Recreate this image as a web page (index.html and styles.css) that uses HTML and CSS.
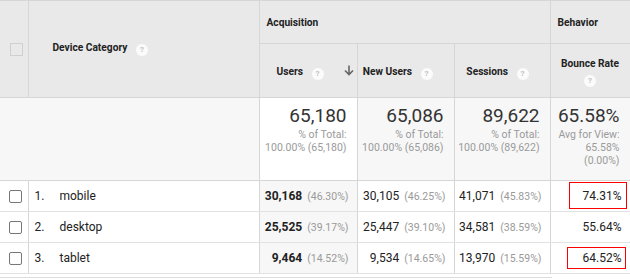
FILE: index.html
```html
<!DOCTYPE html>
<html>
<head>
<meta charset="utf-8">
<link rel="stylesheet" href="styles.css">
</head>
<body>
<div class="wrap">
<table class="report">
  <colgroup>
    <col class="c-cb"><col class="c-dim"><col class="c-users"><col class="c-new"><col class="c-sess"><col class="c-bounce">
  </colgroup>
  <thead>
    <tr class="h1">
      <th class="cb" rowspan="2"><span class="box hbox"></span></th>
      <th class="dim" rowspan="2">Device Category <span class="help">?</span></th>
      <th class="group" colspan="3">Acquisition</th>
      <th class="group">Behavior</th>
    </tr>
    <tr class="h2">
      <th class="metric">Users <span class="help">?</span><svg class="sort" width="10" height="11" viewBox="0 0 10 11"><path d="M5 0.5v8.5M1 5.5l4 4 4-4" fill="none" stroke="#666" stroke-width="1.6"/></svg></th>
      <th class="metric">New Users <span class="help">?</span></th>
      <th class="metric">Sessions <span class="help">?</span></th>
      <th class="metric bounce">Bounce Rate<br><span class="help">?</span></th>
    </tr>
  </thead>
  <tbody>
    <tr class="sum">
      <td></td>
      <td></td>
      <td class="sorted"><div class="big">65,180</div><div class="sub">% of Total:<br>100.00% (65,180)</div></td>
      <td><div class="big">65,086</div><div class="sub">% of Total:<br>100.00% (65,086)</div></td>
      <td><div class="big">89,622</div><div class="sub">% of Total:<br>100.00% (89,622)</div></td>
      <td><div class="big">65.58%</div><div class="sub">Avg for View:<br>65.58%<br>(0.00%)</div></td>
    </tr>
    <tr class="row">
      <td class="cb"><span class="box"></span></td>
      <td class="dim"><span class="idx">1.</span>mobile</td>
      <td class="num sorted"><b>30,168</b><span class="pct">(46.30%)</span></td>
      <td class="num">30,105<span class="pct">(46.25%)</span></td>
      <td class="num">41,071<span class="pct">(45.83%)</span></td>
      <td class="num rate">74.31%<span class="mark m1"></span></td>
    </tr>
    <tr class="row">
      <td class="cb"><span class="box"></span></td>
      <td class="dim"><span class="idx">2.</span>desktop</td>
      <td class="num sorted"><b>25,525</b><span class="pct">(39.17%)</span></td>
      <td class="num">25,447<span class="pct">(39.10%)</span></td>
      <td class="num">34,581<span class="pct">(38.59%)</span></td>
      <td class="num rate">55.64%</td>
    </tr>
    <tr class="row">
      <td class="cb"><span class="box"></span></td>
      <td class="dim"><span class="idx">3.</span>tablet</td>
      <td class="num sorted"><b>9,464</b><span class="pct">(14.52%)</span></td>
      <td class="num">9,534<span class="pct">(14.65%)</span></td>
      <td class="num">13,970<span class="pct">(15.59%)</span></td>
      <td class="num rate">64.52%<span class="mark m3"></span></td>
    </tr>
  </tbody>
</table>
<div class="foot"></div>
</div>
</body>
</html>
```
FILE: styles.css
```css
html, body { margin: 0; padding: 0; background: #fff; }
body { font-family: Roboto, "Liberation Sans", Arial, sans-serif; color: #333; }
.wrap { width: 630px; }
.report { border-collapse: collapse; table-layout: fixed; width: 630px; }
.c-cb { width: 28px; }
.c-dim { width: 231px; }
.c-users { width: 98px; }
.c-new { width: 97px; }
.c-sess { width: 96px; }
.c-bounce { width: 80px; }
th, td { padding: 0; border: 1px solid #d6d6d6; }
thead th { background: #e9e9e9; font-size: 10.2px; font-weight: 700; color: #222; text-align: left; }
.report tr > :first-child { border-left: 0; }
.h1 { height: 43px; }
.h2 { height: 54px; }
th.cb { text-align: left; vertical-align: middle; padding-left: 10px; }
th.dim { padding-left: 24px; vertical-align: middle; }
th.group { padding-left: 7px; vertical-align: middle; }
th.metric { text-align: right; padding-right: 21px; padding-top: 4px; vertical-align: middle; white-space: nowrap; }
th.metric:first-child { padding-right: 3px; }
th.bounce { text-align: center; padding: 2px 0 0 0; line-height: 15px; }
.sort { margin-left: 20px; vertical-align: -1px; }
.help { display: inline-block; width: 12px; height: 12px; border-radius: 50%; background: #fbfbfb; color: #c4c4c4; font-size: 8px; line-height: 12px; text-align: center; font-weight: 700; margin-left: 6px; vertical-align: -1px; }
th.bounce .help { margin-left: 0; margin-top: 2px; }
.box { display: block; width: 11px; height: 11px; border: 1px solid #777; border-radius: 2px; background: #fff; box-sizing: content-box; }
.hbox { border-color: #d0d0d0; background: #e9e9e9; border-radius: 0; }
.sum { height: 83px; }
.sum td { background: #f7f7f7; vertical-align: top; text-align: right; padding: 7px 10px 0 0; border-top: 0; }
.sum td:first-child, .sum td:nth-child(2) { border-left: 0; border-right: 0; }
.sum td:nth-child(2) { border-right: 1px solid #d6d6d6; }
.sum td.sorted { background: #fff; }
.big { font-size: 19px; line-height: 22px; color: #333; }
.sub { font-size: 10.5px; line-height: 13px; color: #9a9a9a; margin-top: 1px; }
.row { height: 31px; }
.row td { border-color: #e2e2e2; border-left-color: #d6d6d6; border-right-color: #d6d6d6; font-size: 12px; vertical-align: middle; color: #222; }
.row td.cb { padding-left: 9px; }
.row td.dim { padding-left: 6px; }
.idx { display: inline-block; width: 25px; }
.row td.num { text-align: right; padding-right: 8px; white-space: nowrap; }
.row td.sorted { background: #f7f7f7; }
.row td.sorted b { font-weight: 700; }
.pct { font-size: 10.5px; color: #9a9a9a; margin-left: 5px; letter-spacing: 0; }
.row td.rate { padding-right: 8px; position: relative; }
.mark { position: absolute; border: 1px solid #ff0000; z-index: 2; }
.m1 { left: 18px; top: 1px; width: 56px; height: 25px; }
.m3 { left: 16px; top: 4px; width: 57px; height: 20px; }
.foot { margin-top: 3px; width: 552px; border-top: 1px solid #ddd; }
```
